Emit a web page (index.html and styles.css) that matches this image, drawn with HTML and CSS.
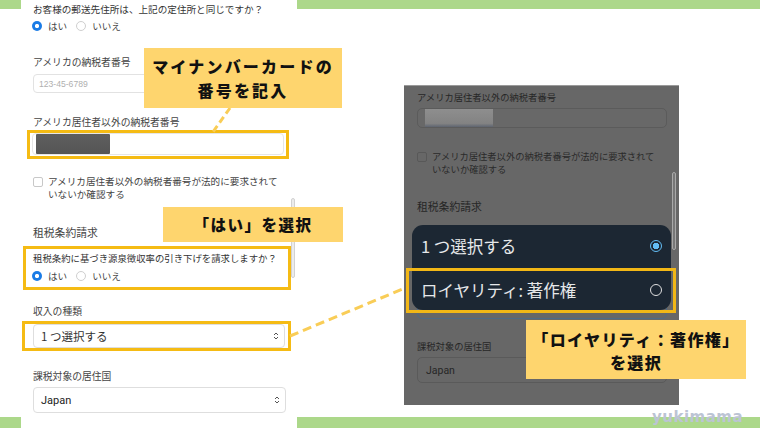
FILE: index.html
```html
<!DOCTYPE html>
<html lang="ja">
<head>
<meta charset="utf-8">
<title>税務情報</title>
<link rel="stylesheet" href="styles.css">
</head>
<body>
<div class="page">
  <div class="form">
    <p class="q q1">お客様の郵送先住所は、上記の定住所と同じですか？</p>
    <div class="radios r1">
      <span class="radio on"></span><span class="rl">はい</span>
      <span class="radio"></span><span class="rl">いいえ</span>
    </div>
    <p class="lbl l1">アメリカの納税者番号</p>
    <div class="input in1"><span class="ph">123-45-6789</span></div>
    <p class="lbl l2">アメリカ居住者以外の納税者番号</p>
    <div class="hl hl1"><div class="input in2"><span class="redact"></span></div></div>
    <div class="check">
      <span class="cb"></span>
      <p class="ct">アメリカ居住者以外の納税者番号が法的に要求されて<br>いないか確認する</p>
    </div>
    <h3 class="sec">租税条約請求</h3>
    <div class="hl hl2">
      <p class="q q2">租税条約に基づき源泉徴収率の引き下げを請求しますか？</p>
      <div class="radios r2">
        <span class="radio on"></span><span class="rl">はい</span>
        <span class="radio"></span><span class="rl">いいえ</span>
      </div>
    </div>
    <p class="lbl l3">収入の種類</p>
    <div class="hl hl3">
      <div class="select s1"><span class="sv">1 つ選択する</span>
        <svg class="chev" width="6" height="10" viewBox="0 0 6 10"><path d="M1 4 L3 2 L5 4 M1 6 L3 8 L5 6" fill="none" stroke="#555" stroke-width="1"/></svg>
      </div>
    </div>
    <p class="lbl l4">課税対象の居住国</p>
    <div class="select s2"><span class="sv en">Japan</span>
      <svg class="chev" width="6" height="10" viewBox="0 0 6 10"><path d="M1 4 L3 2 L5 4 M1 6 L3 8 L5 6" fill="none" stroke="#555" stroke-width="1"/></svg>
    </div>
    <span class="scroll"></span>
  </div>

  <div class="right">
    <div class="shot">
      <p class="slbl sl1">アメリカ居住者以外の納税者番号</p>
      <div class="sin"><span class="sred"></span></div>
      <div class="scheck">
        <span class="scb"></span>
        <p class="sct">アメリカ居住者以外の納税者番号が法的に要求されて<br>いないか確認する</p>
      </div>
      <h3 class="ssec">租税条約請求</h3>
      <div class="sfield focus"></div>
      <p class="slbl sl2">課税対象の居住国</p>
      <div class="sfield sjp"><span>Japan</span></div>
      <span class="sscroll"></span>
      <div class="menu">
        <div class="mi mi1"><span>1 つ選択する</span><span class="mr on"></span></div>
        <div class="mi mi2"><span>ロイヤリティ: 著作権</span><span class="mr"></span></div>
      </div>
      <div class="mhl"></div>
    </div>
  </div>

  <svg class="lines" width="760" height="428" viewBox="0 0 760 428">
    <line x1="230" y1="108" x2="213" y2="132" stroke="#f9cd57" stroke-width="3" stroke-dasharray="7 4"/>
    <line x1="290" y1="336" x2="405" y2="288" stroke="#f9cd57" stroke-width="3" stroke-dasharray="9 5"/>
  </svg>

  <div class="callout c1">マイナンバーカードの<br>番号を記入</div>
  <div class="callout c2">「はい」を選択</div>
  <div class="callout c3">「ロイヤリティ：著作権」<br>を選択</div>
  <div class="wm">yukimama</div>
</div>
</body>
</html>
```

FILE: styles.css
```css
* { box-sizing: border-box; margin: 0; padding: 0; }
body {
  margin: 0;
  background: #fff;
  font-family: "Noto Sans CJK JP", "Noto Sans", sans-serif;
  color: #333;
}
.page {
  position: relative;
  width: 760px;
  height: 428px;
  overflow: hidden;
  display: flex;
  align-items: flex-start;
  background:
    linear-gradient(#acd88a, #acd88a) top / 100% 9px no-repeat,
    linear-gradient(#acd88a, #acd88a) bottom / 100% 11px no-repeat,
    #fff;
}

/* ---------- left form ---------- */
.form {
  position: relative;
  flex: none;
  width: 276px;
  height: 428px;
  margin-left: 21px;
  padding: 0 11px 0 12px;
  background: #fff;
}
.q { font-size: 9.6px; line-height: 14px; color: #333; white-space: nowrap; }
.q1 { margin-top: 2px; }
.q2 { font-size: 9.4px; }
.radios {
  display: flex;
  align-items: center;
  height: 14px;
  font-size: 9.6px;
  color: #444;
}
.r1 { margin-top: 3px; }
.r2 { margin-top: 4px; }
.radio {
  width: 10px;
  height: 10px;
  border-radius: 50%;
  border: 1px solid #cfcfcf;
  background: #fff;
  margin-left: -1px;
}
.radio.on {
  border: none;
  background: radial-gradient(circle, #fff 0 1.8px, #1b7ce6 2.4px);
}
.rl { margin-left: 6px; margin-right: 10px; }
.lbl { font-size: 9.8px; line-height: 14px; color: #444; }
.l1 { margin-top: 22px; }
.l2 { margin-top: 22px; }
.l3 { margin-top: 14px; }
.l4 { margin-top: 18px; }
.input {
  height: 19px;
  border: 1px solid #e2e2e2;
  border-radius: 4px;
  background: #fff;
}
.in1 { margin-top: 5px; display: flex; align-items: center; }
.ph {
  padding-left: 5px;
  font-family: "Liberation Sans", Arial, sans-serif;
  font-size: 8.6px;
  color: #b0b0b0;
}
.hl { border: 3px solid #f5bb14; }
.hl1 {
  margin: 1px 0 0 -6px;
  width: 262px;
  padding: 0 2px 1px 2px;
}
.in2 {
  height: 22px;
  display: flex;
  align-items: flex-start;
  padding-left: 3px;
  border-color: #e6e6e6;
}
.redact {
  width: 74px;
  height: 20px;
  background: linear-gradient(#5f5f5f, #555);
  border-radius: 1px;
}
.check { display: flex; align-items: flex-start; margin-top: 16px; }
.cb {
  flex: none;
  width: 10px;
  height: 10px;
  margin-top: 1.5px;
  margin-right: 5px;
  border: 1px solid #c8c8c8;
  border-radius: 2px;
  background: #fff;
}
.ct { font-size: 9.6px; line-height: 13px; color: #444; }
.sec { font-size: 10.8px; line-height: 14px; font-weight: 400; color: #444; margin-top: 24px; }
.hl2 {
  margin: 7px 0 0 -10px;
  width: 268px;
  padding: 2px 2px 4px 7px;
}
.hl3 {
  margin: 3px 0 0 -11px;
  width: 269px;
  padding: 0 3px 0 8px;
}
.select {
  display: flex;
  align-items: center;
  justify-content: space-between;
  border: 1px solid #dedede;
  border-radius: 4px;
  background: #fff;
  padding: 0 5px 0 7px;
}
.s1 { height: 24px; }
.s2 { height: 26px; margin-top: 4px; }
.sv { font-size: 11.5px; color: #333; }
.sv.en { font-family: Roboto, "Liberation Sans", sans-serif; font-size: 11px; color: #222; }
.chev { display: block; }
.scroll {
  position: absolute;
  left: 270px;
  top: 198px;
  width: 4px;
  height: 80px;
  border: 1px solid #d2d2d2;
  border-radius: 2px;
  background: #ececec;
}

/* ---------- right screenshot ---------- */
.right { flex: none; margin-left: 107px; margin-top: 85px; }
.shot {
  position: relative;
  width: 275px;
  height: 320px;
  background: #676767;
  border-top: 1px solid #9a9a9a;
  padding: 0 12px 0 13px;
}
.slbl { font-size: 9.3px; line-height: 14px; color: #262626; }
.sl1 { margin-top: 4px; }
.sl2 { margin-top: 20px; }
.sin {
  margin-top: 4px;
  height: 20px;
  border: 1px solid #5b5b5b;
  border-radius: 5px;
  background: #686868;
  padding-left: 7px;
}
.sred {
  display: block;
  width: 68px;
  height: 18px;
  background: linear-gradient(#8e8e8e, #838383 80%, #5e6470);
}
.scheck { display: flex; align-items: flex-start; margin-top: 22px; }
.scb {
  flex: none;
  width: 10px;
  height: 10px;
  margin-top: 1.5px;
  margin-right: 5px;
  border: 1px solid #585858;
  border-radius: 2px;
}
.sct { font-size: 9.3px; line-height: 13px; color: #2a2a2a; }
.ssec { font-size: 10.8px; line-height: 14px; font-weight: 400; color: #262626; margin-top: 23px; }
.sfield {
  height: 26px;
  border: 1px solid #5a5a5a;
  border-radius: 5px;
  display: flex;
  align-items: center;
  padding-left: 8px;
  font-family: Roboto, "Liberation Sans", sans-serif;
  font-size: 10.5px;
  color: #262626;
}
.focus { margin-top: 80px; border: 1.5px solid #4f6a84; }
.sjp { margin-top: 4px; }
.sscroll {
  position: absolute;
  left: 268px;
  top: 86px;
  width: 4px;
  height: 78px;
  border: 1px solid #a9a9a9;
  border-radius: 3px;
  background: #777;
}
.menu {
  position: absolute;
  left: 8px;
  top: 139px;
  width: 259px;
  height: 85px;
  background: #1c2733;
  border-radius: 11px;
  padding: 0 9px;
}
.mi {
  display: flex;
  align-items: center;
  justify-content: space-between;
  font-size: 16.5px;
  color: #e6e8ea;
}
.mi1 { height: 42px; }
.mi2 { height: 40px; margin-top: 3px; }
.mr {
  width: 12px;
  height: 12px;
  border-radius: 50%;
  border: 1.3px solid #e0e0e0;
}
.mr.on {
  border: 1.5px solid #62bdf5;
  background: radial-gradient(circle, #62bdf5 0 3px, transparent 3.5px);
}
.mhl {
  position: absolute;
  left: 2px;
  top: 182px;
  width: 270px;
  height: 45px;
  border: 3px solid #f2b716;
}

/* ---------- overlays ---------- */
.lines { position: absolute; left: 0; top: 0; pointer-events: none; }
.callout {
  position: absolute;
  background: #fed56e;
  color: #111;
  font-weight: 900;
  text-align: center;
}
.c1 {
  left: 144px; top: 48px; width: 198px; height: 60px;
  padding-top: 6px;
  font-size: 16px; line-height: 24px; letter-spacing: 2.2px;
}
.c2 {
  left: 163px; top: 207px; width: 180px; height: 35px;
  font-size: 15.5px; line-height: 35px; letter-spacing: 1.5px;
}
.c3 {
  left: 526px; top: 320px; width: 220px; height: 59px;
  padding-top: 8px;
  font-size: 16px; line-height: 23px; letter-spacing: 1.4px;
}
.wm {
  position: absolute;
  left: 652px;
  top: 410px;
  font-family: "DejaVu Sans", sans-serif;
  font-weight: 700;
  font-size: 15px;
  line-height: 15px;
  letter-spacing: 0.5px;
  color: #bcc4d4;
}
```
